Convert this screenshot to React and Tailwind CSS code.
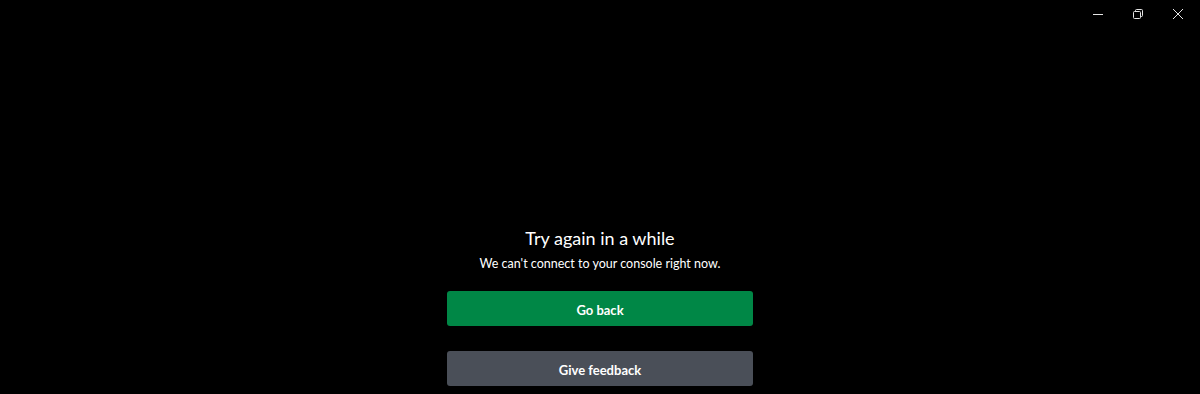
export default function App() {
  return (
    <div className="w-[1200px] h-[394px] bg-black overflow-hidden flex flex-col" style={{ fontFamily: 'Lato, "Noto Sans", sans-serif' }}>
      <div className="h-[28px] flex justify-end pr-[2px]">
        <div className="w-[40px] h-[28px] flex items-center justify-center">
          <svg width="10" height="10" viewBox="0 0 10 10"><path d="M0 5.5h10" stroke="#e5e5e5" strokeWidth="1" /></svg>
        </div>
        <div className="w-[40px] h-[28px] flex items-center justify-center">
          <svg width="10" height="10" viewBox="0 0 10 10" fill="none" stroke="#e5e5e5" strokeWidth="1">
            <rect x="0.5" y="2.5" width="7" height="7" rx="1" />
            <path d="M2.5 2.5V1.5a1 1 0 0 1 1-1h5a1 1 0 0 1 1 1v5a1 1 0 0 1-1 1h-1" />
          </svg>
        </div>
        <div className="w-[40px] h-[28px] flex items-center justify-center">
          <svg width="10" height="10" viewBox="0 0 10 10"><path d="M0 0L10 10M10 0L0 10" stroke="#e5e5e5" strokeWidth="1" /></svg>
        </div>
      </div>
      <div className="flex flex-col items-center pt-[198px]">
        <div className="text-[18px] leading-[24px] text-white">Try again in a while</div>
        <div className="text-[12.5px] leading-[18px] text-white mt-[5px]">We can't connect to your console right now.</div>
        <button className="mt-[18px] w-[306px] h-[35px] pt-[4px] rounded-[3px] bg-[#008746] text-white text-[13px] font-bold">Go back</button>
        <button className="mt-[25px] w-[306px] h-[35px] pt-[4px] rounded-[3px] bg-[#4a4f58] text-white text-[13px] font-bold">Give feedback</button>
      </div>
    </div>
  );
}
